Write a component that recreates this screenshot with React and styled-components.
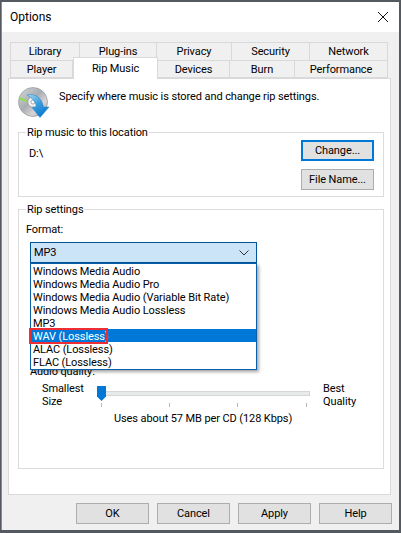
import React from 'react';
import styled, { createGlobalStyle } from 'styled-components';

const GlobalStyle = createGlobalStyle`
  html, body {
    margin: 0;
    padding: 0;
    background: #4a4f55;
  }
  * { box-sizing: border-box; }
`;

const Desktop = styled.div`
  width: 401px;
  height: 533px;
  overflow: hidden;
  padding: 2px 1px 3px 1px;
  background: #555a60;
`;

const Dialog = styled.div`
  width: 398px;
  height: 528px;
  display: flex;
  flex-direction: column;
  background: #f0f0f0;
  font-family: Roboto, "Liberation Sans", sans-serif;
  font-size: 11px;
  letter-spacing: -0.1px;
  color: #000;
  border-left: 1px solid #8a8a8a;
`;

const TitleBar = styled.div`
  height: 30px;
  flex: none;
  display: flex;
  align-items: center;
  justify-content: space-between;
  padding: 0 10px 0 8px;
  background: #fff;
  font-size: 12px;
  letter-spacing: 0;
`;

const Body = styled.div`
  flex: 1;
  display: flex;
  flex-direction: column;
  padding: 10px 6px 0 6px;
`;

const TabRow = styled.div`
  display: flex;
  height: 18px;
  padding-left: 2px;
  flex: none;
`;

const Tab = styled.div`
  width: ${({ $w }) => $w}px;
  display: flex;
  align-items: center;
  justify-content: center;
  background: ${({ $active }) => ($active ? '#fff' : '#f0f0f0')};
  border: 1px solid #d9d9d9;
  border-left-width: ${({ $first, $active }) => ($first || $active ? 1 : 0)}px;
  border-bottom-width: ${({ $active, $bottomless }) => ($active || $bottomless ? 0 : 1)}px;
  position: relative;
  z-index: ${({ $active }) => ($active ? 2 : 1)};
  margin-top: ${({ $active }) => ($active ? -3 : 0)}px;
  height: ${({ $active }) => ($active ? 'calc(100% + 4px)' : '100%')};
`;

const Panel = styled.div`
  width: 383px;
  height: 417px;
  flex: none;
  background: #fff;
  border: 1px solid #d9d9d9;
  padding: 7px 6px 0 9px;
  display: flex;
  flex-direction: column;
`;

const Intro = styled.div`
  display: flex;
  align-items: flex-start;
  gap: 8px;
  height: 32px;
  flex: none;
  margin-bottom: 8px;
`;

const IntroText = styled.span`
  line-height: 15px;
  margin-top: 3px;
`;

const Group = styled.fieldset`
  margin: 0;
  padding: 0;
  position: relative;
  width: 366px;
  height: ${({ $h }) => $h}px;
  margin-bottom: ${({ $mb }) => $mb || 0}px;
  border: 1px solid #dcdcdc;
  flex: none;
`;

const Legend = styled.legend`
  margin-left: 7px;
  padding: 0 1px;
  height: 12px;
  line-height: 14px;
`;

const LocationRow = styled.div`
  display: flex;
  justify-content: space-between;
  padding: 2px 9px 0 10px;
`;

const Path = styled.div`
  line-height: 15px;
  padding-top: 6px;
`;

const ButtonColumn = styled.div`
  display: flex;
  flex-direction: column;
  gap: 8px;
`;

const Button = styled.button`
  width: 73px;
  height: 21px;
  padding: 0;
  font: inherit;
  letter-spacing: inherit;
  color: #000;
  background: #e1e1e1;
  border: ${({ $focused }) => ($focused ? '2px solid #0078d7' : '1px solid #adadad')};
  border-radius: 0;
`;

const FormatLabel = styled.div`
  line-height: 15px;
  padding: 7px 0 0 7px;
`;

const Combo = styled.div`
  margin: 5px 0 0 11px;
  width: 227px;
  height: 21px;
  background: #cce4f7;
  border: 1px solid #005499;
  display: flex;
  align-items: center;
  justify-content: space-between;
  padding: 0 7px 0 3px;
`;

const DropList = styled.ul`
  position: absolute;
  left: 11px;
  top: 48px;
  width: 227px;
  height: 107px;
  margin: 0;
  padding: 0;
  list-style: none;
  background: #fff;
  border: 1px solid #0a5fa8;
  box-shadow: 2px 2px 3px rgba(0, 0, 0, 0.35);
  z-index: 5;
`;

const DropItem = styled.li`
  height: 13px;
  line-height: 15px;
  padding-left: 2px;
  white-space: nowrap;
  background: ${({ $selected }) => ($selected ? '#0078d7' : 'transparent')};
  color: ${({ $selected }) => ($selected ? '#fff' : '#000')};
`;

const Highlight = styled.div`
  position: absolute;
  left: -2px;
  top: 64px;
  width: 79px;
  height: 16px;
  border: 2px solid #ee2e34;
  pointer-events: none;
`;

const QualityLabel = styled.div`
  margin: 101px 0 0 11px;
  line-height: 15px;
  height: 15px;
`;

const QualityRow = styled.div`
  display: flex;
  margin-top: 1px;
`;

const SideLabel = styled.div`
  width: ${({ $w }) => $w}px;
  padding-left: ${({ $pl }) => $pl}px;
  line-height: 13px;
  padding-top: 2px;
  flex: none;
`;

const SliderBox = styled.div`
  position: relative;
  width: 226px;
  height: 26px;
  margin-top: 5px;
  flex: none;
`;

const Track = styled.div`
  position: absolute;
  left: 0;
  top: 6px;
  width: 213px;
  height: 5px;
  background: #e7eaea;
  border: 1px solid #d6d6d6;
`;

const Thumb = styled.svg`
  position: absolute;
  left: 0;
  top: 1px;
`;

const Tick = styled.div`
  position: absolute;
  top: 18px;
  left: ${({ $x }) => $x}px;
  width: 1px;
  height: 4px;
  background: #b8b8b8;
`;

const Usage = styled.div`
  padding-left: 95px;
  line-height: 15px;
`;

const Footer = styled.div`
  display: flex;
  justify-content: flex-end;
  gap: 8px;
  padding: 8px 0 0 0;
  width: 384px;
`;

const topTabs = [
  ['Library', 70], ['Plug-ins', 77], ['Privacy', 75], ['Security', 78], ['Network', 78],
];
const bottomTabs = [
  ['Player', 63], ['Rip Music', 85], ['Devices', 72], ['Burn', 65], ['Performance', 93],
];
const formats = [
  'Windows Media Audio', 'Windows Media Audio Pro', 'Windows Media Audio (Variable Bit Rate)',
  'Windows Media Audio Lossless', 'MP3', 'WAV (Lossless)', 'ALAC (Lossless)', 'FLAC (Lossless)',
];

const DiscIcon = () => (
  <svg width="33" height="33" viewBox="0 0 33 33" style={{ flex: 'none' }}>
    <defs>
      <linearGradient id="disc" x1="0" y1="0" x2="1" y2="1">
        <stop offset="0" stopColor="#d8dadc" />
        <stop offset="0.45" stopColor="#a9adb1" />
        <stop offset="0.7" stopColor="#d9d4d8" />
        <stop offset="1" stopColor="#8f9498" />
      </linearGradient>
      <linearGradient id="arrow" x1="0" y1="0" x2="0.6" y2="1">
        <stop offset="0" stopColor="#a6d8f2" />
        <stop offset="0.5" stopColor="#3b9fe0" />
        <stop offset="1" stopColor="#0a78cc" />
      </linearGradient>
    </defs>
    <circle cx="15" cy="16" r="14.5" fill="url(#disc)" stroke="#94989c" strokeWidth="0.7" />
    <path d="M2 11 L9 14.5 L8.5 16 L1.5 13.5 Z" fill="#8fe04a" />
    <circle cx="15" cy="16" r="5.2" fill="#eef0f1" stroke="#9a9ea2" strokeWidth="0.8" />
    <circle cx="15" cy="16" r="2" fill="#fff" stroke="#8b8f93" strokeWidth="0.7" />
    <path
      d="M9 9 C16 7 24 11 25.5 21 L31 21 L22 31.5 L14 21.5 L18.5 21 C18 16 14 12 9 9 Z"
      fill="url(#arrow)"
      stroke="#2183c9"
      strokeWidth="0.5"
    />
  </svg>
);

const Close = () => (
  <svg width="12" height="12" viewBox="0 0 12 12">
    <path d="M1 1 L11 11 M11 1 L1 11" stroke="#111" strokeWidth="1" fill="none" />
  </svg>
);

const Chevron = () => (
  <svg width="10" height="6" viewBox="0 0 10 6">
    <path d="M0.5 0.5 L5 5 L9.5 0.5" stroke="#333" strokeWidth="1" fill="none" />
  </svg>
);

const App = () => (
  <Desktop>
    <GlobalStyle />
    <Dialog>
      <TitleBar>
        <span>Options</span>
        <Close />
      </TitleBar>
      <Body>
        <TabRow>
          {topTabs.map(([label, w], i) => (
            <Tab key={label} $w={w} $first={i === 0} $bottomless>{label}</Tab>
          ))}
        </TabRow>
        <TabRow>
          {bottomTabs.map(([label, w], i) => (
            <Tab key={label} $w={w} $first={i === 0} $active={label === 'Rip Music'}>{label}</Tab>
          ))}
        </TabRow>
        <Panel>
          <Intro>
            <DiscIcon />
            <IntroText>Specify where music is stored and change rip settings.</IntroText>
          </Intro>
          <Group $h={71} $mb={6}>
            <Legend>Rip music to this location</Legend>
            <LocationRow>
              <Path>D:\</Path>
              <ButtonColumn>
                <Button $focused>Change...</Button>
                <Button>File Name...</Button>
              </ButtonColumn>
            </LocationRow>
          </Group>
          <Group $h={266}>
            <Legend>Rip settings</Legend>
            <FormatLabel>Format:</FormatLabel>
            <Combo>
              <span>MP3</span>
              <Chevron />
            </Combo>
            <DropList>
              {formats.map((f) => (
                <DropItem key={f} $selected={f === 'WAV (Lossless)'}>{f}</DropItem>
              ))}
              <Highlight />
            </DropList>
            <QualityLabel>Audio quality:</QualityLabel>
            <QualityRow>
              <SideLabel $w={78} $pl={23}>Smallest<br />Size</SideLabel>
              <SliderBox>
                <Track />
                <Thumb width="9" height="15" viewBox="0 0 9 15">
                  <path d="M0 0 H9 V10.5 L4.5 15 L0 10.5 Z" fill="#0078d7" />
                </Thumb>
                {[4, 72, 140, 209].map((x) => <Tick key={x} $x={x} />)}
              </SliderBox>
              <SideLabel $w={50} $pl={0}>Best<br />Quality</SideLabel>
            </QualityRow>
            <Usage>Uses about 57 MB per CD (128 Kbps)</Usage>
          </Group>
        </Panel>
        <Footer>
          <Button>OK</Button>
          <Button>Cancel</Button>
          <Button>Apply</Button>
          <Button>Help</Button>
        </Footer>
      </Body>
    </Dialog>
  </Desktop>
);

export default App;
